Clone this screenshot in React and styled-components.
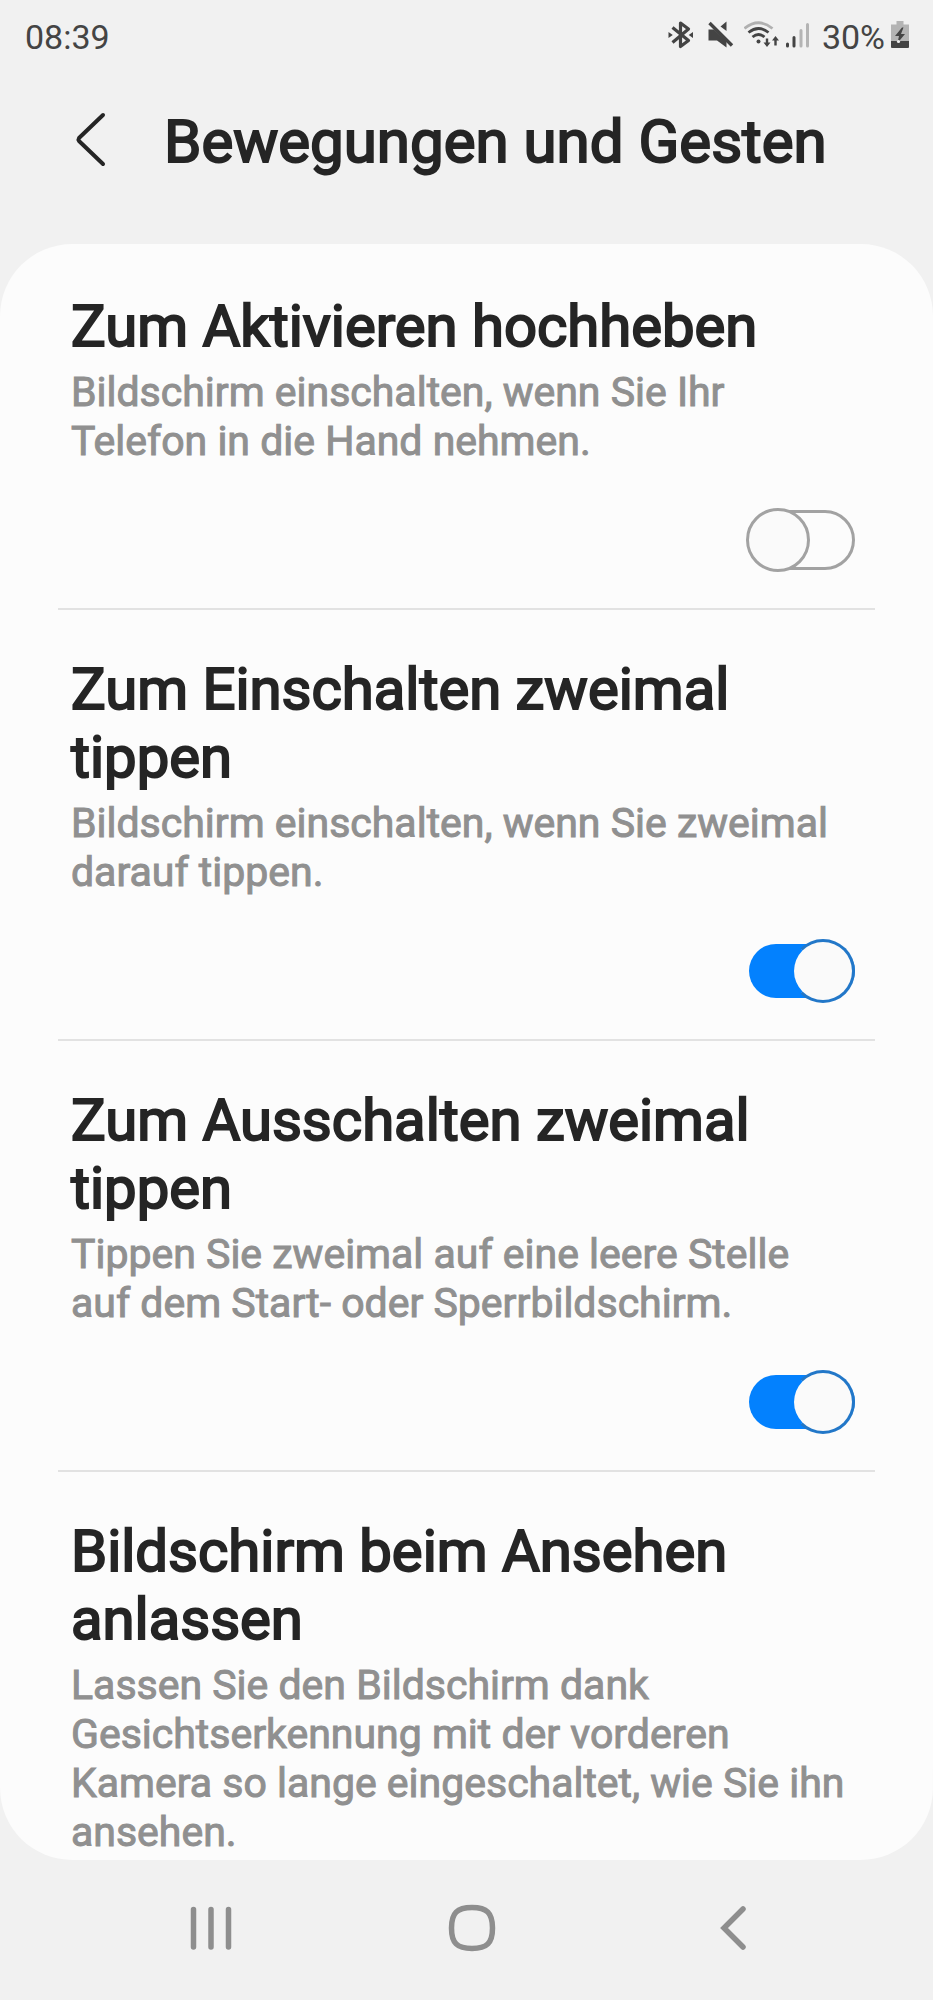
import React from 'react';
import styled, { createGlobalStyle } from 'styled-components';

const GlobalStyle = createGlobalStyle`
  *, *::before, *::after {
    box-sizing: border-box;
  }
  body {
    margin: 0;
    background: #f1f1f1;
    font-family: Roboto, "Noto Sans", sans-serif;
    color: #252525;
  }
`;

export const AppView = styled.div`
  display: flex;
  flex-direction: column;
  height: 100vh;
`;

export const StatusBar = styled.div`
  display: flex;
  align-items: center;
  justify-content: space-between;
  padding: 17px 24px 15px 25px;
  font-size: 34px;
  line-height: 40px;
  color: #444;
`;

export const StatusIcons = styled.div`
  display: flex;
  align-items: center;
  svg {
    display: block;
  }
`;

export const StatusIcon = styled.svg`
  height: 32px;
  width: ${({ $width }) => $width}px;
  margin-right: ${({ $gap }) => $gap || 0}px;
`;

export const BatteryLevel = styled.span`
  margin-right: 6px;
`;

export const Header = styled.header`
  display: flex;
  align-items: center;
  padding: 33px 58px 65px;
`;

export const IconButton = styled.button`
  display: flex;
  align-items: center;
  justify-content: center;
  padding: 0;
  border: 0;
  background: none;
  color: inherit;
`;

export const BackButton = styled(IconButton)`
  width: 64px;
  height: 64px;
  margin-right: 42px;
`;

export const PageTitle = styled.h1`
  margin: 0;
  font-size: 60px;
  font-weight: 400;
  line-height: 74px;
  -webkit-text-stroke: 2px currentColor;
`;

export const Card = styled.main`
  flex: 1;
  min-height: 0;
  overflow-y: auto;
  scrollbar-width: none;
  padding: 3px 58px 0;
  border-radius: 72px;
  background: #fcfcfc;
`;

export const Row = styled.section`
  display: flex;
  flex-direction: column;
  padding: 45px 20px 36px 13px;
  border-bottom: 2px solid #e2e2e2;
  &:last-child {
    border-bottom: 0;
  }
`;

export const RowTitle = styled.label`
  font-size: 58px;
  line-height: 68px;
  -webkit-text-stroke: 2px currentColor;
`;

export const RowText = styled.p`
  margin: 8px 0 42px;
  font-size: 41px;
  line-height: 49px;
  color: #909090;
  -webkit-text-stroke: 1px currentColor;
`;

export const Switch = styled.input`
  appearance: none;
  position: relative;
  align-self: flex-end;
  width: 109px;
  height: 64px;
  margin: 0;
  &::before {
    content: '';
    position: absolute;
    top: 2px;
    right: 0;
    bottom: 2px;
    left: 3px;
    border: 3px solid #a2a2a2;
    border-radius: 30px;
  }
  &::after {
    content: '';
    position: absolute;
    top: 0;
    left: 0;
    width: 64px;
    height: 64px;
    border: 3px solid #a2a2a2;
    border-radius: 50%;
    background: #fafafa;
  }
  &:checked::before {
    top: 5px;
    bottom: 5px;
    border: 0;
    background: #0381fe;
  }
  &:checked::after {
    left: 45px;
    border-color: #2277c8;
    border-left-color: #0381fe;
  }
`;

export const NavBar = styled.nav`
  display: grid;
  grid-template-columns: 1fr 1fr 1fr;
  height: 140px;
  padding: 0 70px 4px 80px;
  color: #8e8e8e;
`;

const settings = [
  {
    id: 'lift',
    title: 'Zum Aktivieren hochheben',
    text: 'Bildschirm einschalten, wenn Sie Ihr Telefon in die Hand nehmen.',
    on: false,
  },
  {
    id: 'tap-on',
    title: 'Zum Einschalten zweimal tippen',
    text: 'Bildschirm einschalten, wenn Sie zweimal darauf tippen.',
    on: true,
  },
  {
    id: 'tap-off',
    title: 'Zum Ausschalten zweimal tippen',
    text: 'Tippen Sie zweimal auf eine leere Stelle auf dem Start- oder Sperrbildschirm.',
    on: true,
  },
  {
    id: 'stay-on',
    title: 'Bildschirm beim Ansehen anlassen',
    text: 'Lassen Sie den Bildschirm dank Gesichtserkennung mit der vorderen Kamera so lange eingeschaltet, wie Sie ihn ansehen.',
    on: false,
  },
];

const Bluetooth = () => (
  <StatusIcon $width={26} $gap={14} viewBox="0 0 26 32" fill="none" stroke="currentColor">
    <path d="M4.5 6.5 L20.5 19.5 L12.5 25.5 V2 L20.5 8 L4.5 21.5" strokeWidth="3.2" strokeLinejoin="round" />
    <path d="M0.5 11 L4.8 14 L0.5 17 Z M25 11 L20.7 14 L25 17 Z" fill="currentColor" stroke="none" />
  </StatusIcon>
);

const Mute = () => (
  <StatusIcon $width={26} $gap={10} viewBox="0 0 26 32" fill="currentColor">
    <path d="M0.5 8.5 H6 L18.5 20.5 V26.5 L9 19.5 H0.5 Z" />
    <path d="M18.5 0.5 V10 L12.5 5.5 Z" />
    <path d="M1.5 2 L24 24.5" fill="none" stroke="currentColor" strokeWidth="3.4" />
  </StatusIcon>
);

const Wifi = () => (
  <StatusIcon $width={36} $gap={6} viewBox="0 0 36 32" fill="none" stroke="currentColor" strokeWidth="2.8">
    <path d="M0.5 7.5 Q14.5 -4 28.5 7.5" stroke="#b0b0b0" />
    <path d="M4.5 11.5 Q14.5 3.5 24.5 11.5" />
    <path d="M8.5 16 Q14.5 11 20.5 16" />
    <circle cx="14.5" cy="20.5" r="2" fill="currentColor" stroke="none" />
    <path d="M23 17.5 V24 M31.5 24.5 V18" strokeWidth="2.4" />
    <path d="M19.5 21.5 H26.5 L23 26 Z M28 19.5 H35 L31.5 15 Z" fill="currentColor" stroke="none" />
  </StatusIcon>
);

const Signal = () => (
  <StatusIcon $width={24} $gap={12} viewBox="0 0 24 32" strokeWidth="3" strokeLinecap="round">
    <path d="M1.5 23 V25 M8 16.5 V25" stroke="currentColor" />
    <path d="M15 9.5 V25 M21.5 3.5 V25" stroke="#b4b4b4" />
  </StatusIcon>
);

const Battery = () => (
  <StatusIcon $width={18} viewBox="0 0 18 32">
    <path d="M5.5 0 H12.5 V3.5 H18 V27 H0 V3.5 H5.5 Z" fill="#b4b4b4" />
    <path d="M0 20 H18 V25.5 Q18 27 16.5 27 H1.5 Q0 27 0 25.5 Z" fill="#444" />
    <path d="M11 6.5 L4 15 H8 L6.5 22 L14 13 H10 L12.5 6.5 Z" fill="#444" />
    <circle cx="7.5" cy="20.5" r="1.6" fill="#f1f1f1" />
  </StatusIcon>
);

const Setting = ({ id, title, text, on }) => (
  <Row>
    <RowTitle htmlFor={id}>{title}</RowTitle>
    <RowText>{text}</RowText>
    <Switch id={id} type="checkbox" role="switch" defaultChecked={on} />
  </Row>
);

const App = () => (
  <AppView>
    <GlobalStyle />
    <StatusBar>
      <span>08:39</span>
      <StatusIcons>
        <Bluetooth />
        <Mute />
        <Wifi />
        <Signal />
        <BatteryLevel>30%</BatteryLevel>
        <Battery />
      </StatusIcons>
    </StatusBar>
    <Header>
      <BackButton aria-label="Zurück">
        <svg width="64" height="64" viewBox="0 0 64 64" fill="none" stroke="currentColor" strokeWidth="4" strokeLinecap="round" strokeLinejoin="round">
          <path d="M45 5 L21 28 Q20 29.5 21 31 L45 54" />
        </svg>
      </BackButton>
      <PageTitle>Bewegungen und Gesten</PageTitle>
    </Header>
    <Card>
      {settings.map((item) => (
        <Setting key={item.id} {...item} />
      ))}
    </Card>
    <NavBar>
      <IconButton aria-label="Letzte Apps">
        <svg width="44" height="48" viewBox="0 0 44 48" stroke="currentColor" strokeWidth="5.5" strokeLinecap="round">
          <path d="M4.5 5.5 V43 M22 5.5 V43 M39.5 5.5 V43" />
        </svg>
      </IconButton>
      <IconButton aria-label="Startseite">
        <svg width="48" height="48" viewBox="0 0 48 48" fill="none" stroke="currentColor" strokeWidth="5.5">
          <path d="M24 3.5 C39 3.5 44.5 9 44.5 24 C44.5 39 39 44.5 24 44.5 C9 44.5 3.5 39 3.5 24 C3.5 9 9 3.5 24 3.5 Z" />
        </svg>
      </IconButton>
      <IconButton aria-label="Zurück">
        <svg width="28" height="48" viewBox="0 0 28 48" fill="none" stroke="currentColor" strokeWidth="5.5" strokeLinecap="round">
          <path d="M24 5 L5 24 L24 43" />
        </svg>
      </IconButton>
    </NavBar>
  </AppView>
);

export default App;
